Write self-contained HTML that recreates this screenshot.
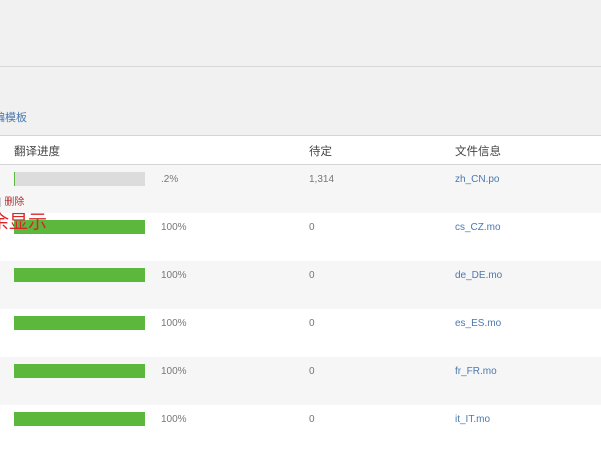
<!DOCTYPE html>
<html><head><meta charset="utf-8"><style>
body{margin:0;width:601px;height:450px;overflow:hidden;background:#f1f1f1;position:relative;font-family:"Liberation Sans","Noto Sans CJK SC",sans-serif;font-size:10px;color:#777}
.a{position:absolute;white-space:nowrap}
.row{position:absolute;left:0;width:601px;height:48px}
.bar{position:absolute;left:14px;width:131px;height:14px;background:#5cb73d}
a{color:#4a78b0;text-decoration:none}
</style></head><body>
<div class="a" style="left:0;top:66px;width:601px;height:1px;background:#d8d8dc"></div>
<div class="a" style="left:-6px;top:109px;color:#4a78b0;font-size:11px">编模板</div>
<div class="a" style="left:0;top:135px;width:601px;height:1px;background:#d5d5d5"></div>
<div class="row" style="top:136px;height:28px;background:#fff"></div>
<div class="a" style="left:0;top:164px;width:601px;height:1px;background:#d5d5d5"></div>
<div class="a" style="left:14px;top:143px;font-size:11.5px;color:#444">翻译进度</div>
<div class="a" style="left:309px;top:143px;font-size:11.5px;color:#444">待定</div>
<div class="a" style="left:455px;top:143px;font-size:11.5px;color:#444">文件信息</div>

<div class="row" style="top:165px;background:#f6f6f6"></div>
<div class="row" style="top:213px;background:#fff"></div>
<div class="row" style="top:261px;background:#f6f6f6"></div>
<div class="row" style="top:309px;background:#fff"></div>
<div class="row" style="top:357px;background:#f6f6f6"></div>
<div class="row" style="top:405px;background:#fff"></div>

<div class="bar" style="top:172px;background:#dcdcdc"></div>
<div class="a" style="left:14px;top:172px;width:1px;height:14px;background:#5cb73d"></div>
<div class="a" style="left:161px;top:174px">.2%</div>
<div class="a" style="left:309px;top:174px">1,314</div>
<div class="a" style="left:455px;top:174px"><a>zh_CN.po</a></div>
<div class="a" style="left:-1px;top:193px;color:#b32d2e"><span style="color:#bbb">|</span> 删除</div>

<div class="bar" style="top:220px"></div>
<div class="a" style="left:161px;top:222px">100%</div><div class="a" style="left:309px;top:222px">0</div><div class="a" style="left:455px;top:222px"><a>cs_CZ.mo</a></div>
<div class="a" style="left:-10px;top:207px;font-size:19px;color:#d9262b">余显示</div>

<div class="bar" style="top:268px"></div>
<div class="a" style="left:161px;top:270px">100%</div><div class="a" style="left:309px;top:270px">0</div><div class="a" style="left:455px;top:270px"><a>de_DE.mo</a></div>
<div class="bar" style="top:316px"></div>
<div class="a" style="left:161px;top:318px">100%</div><div class="a" style="left:309px;top:318px">0</div><div class="a" style="left:455px;top:318px"><a>es_ES.mo</a></div>
<div class="bar" style="top:364px"></div>
<div class="a" style="left:161px;top:366px">100%</div><div class="a" style="left:309px;top:366px">0</div><div class="a" style="left:455px;top:366px"><a>fr_FR.mo</a></div>
<div class="bar" style="top:412px"></div>
<div class="a" style="left:161px;top:414px">100%</div><div class="a" style="left:309px;top:414px">0</div><div class="a" style="left:455px;top:414px"><a>it_IT.mo</a></div>
</body></html>
